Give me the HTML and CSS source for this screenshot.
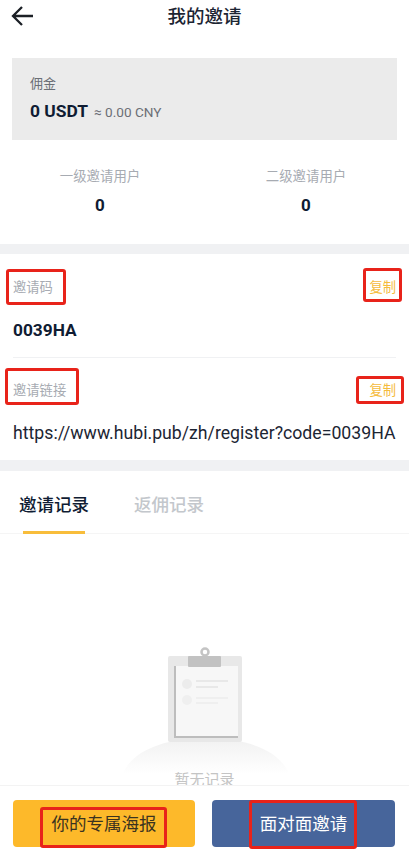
FILE: index.html
```html
<!DOCTYPE html>
<html lang="zh">
<head>
    <meta charset="UTF-8">
    <meta name="viewport" content="width=device-width, initial-scale=1.0">
    <title>我的邀请</title>
    <link rel="stylesheet" href="styles.css">
</head>
<body>
<div class="app">

    <header class="nav">
        <svg class="back" width="26" height="20" viewBox="0 0 26 20">
            <path d="M12 1 3 10l9 9M3 10h20" fill="none" stroke="#1c2026" stroke-width="2.300"/>
        </svg>
        <h1 class="nav-title">我的邀请</h1>
    </header>

    <section class="summary">
        <div class="card">
            <div class="card-label">佣金</div>
            <div class="card-row">
                <span class="card-value">0 USDT</span>
                <span class="card-approx">≈ 0.00 CNY</span>
            </div>
        </div>
        <div class="stats">
            <div class="stat">
                <div class="stat-label">一级邀请用户</div>
                <div class="stat-value">0</div>
            </div>
            <div class="stat">
                <div class="stat-label">二级邀请用户</div>
                <div class="stat-value">0</div>
            </div>
        </div>
    </section>

    <section class="invite">
        <div class="invite-item invite-code">
            <div class="invite-head">
                <span class="invite-label">邀请码<i class="mark mark-code"></i></span>
                <span class="copy">复制<i class="mark mark-copy1"></i></span>
            </div>
            <div class="code-value">0039HA</div>
        </div>
        <div class="invite-item">
            <div class="invite-head">
                <span class="invite-label">邀请链接<i class="mark mark-link"></i></span>
                <span class="copy">复制<i class="mark mark-copy2"></i></span>
            </div>
            <div class="link-value">https://www.hubi.pub/zh/register?code=0039HA</div>
        </div>
    </section>

    <section class="records">
        <div class="tabs">
            <div class="tab tab-active">邀请记录</div>
            <div class="tab">返佣记录</div>
        </div>
        <div class="empty">
            <svg class="empty-pic" width="200" height="134" viewBox="4 0 200 134">
                <defs>
                    <linearGradient id="hill" x1="0" y1="0" x2="0" y2="1">
                        <stop offset="0" stop-color="#f1f1f1"/>
                        <stop offset="1" stop-color="#ffffff"/>
                    </linearGradient>
                </defs>
                <path d="M22 134C30 112 62 98 105 98s75 14 83 36z" fill="url(#hill)"/>
                <rect x="67" y="16" width="74" height="86" rx="2" fill="#e8e8e8"/>
                <rect x="73" y="26" width="64" height="72" fill="#bdbdbd"/>
                <rect x="75" y="26" width="62" height="70" fill="#f7f7f7"/>
                <circle cx="104" cy="12" r="3.500" fill="none" stroke="#c4c4c4" stroke-width="2.500"/>
                <rect x="87" y="16" width="33" height="11" rx="1" fill="#c2c2c2"/>
                <circle cx="86" cy="44" r="5" fill="#ececec"/>
                <circle cx="86" cy="60" r="5" fill="#efefef"/>
                <rect x="95" y="40" width="32" height="2" fill="#e8e8e8"/>
                <rect x="95" y="46" width="22" height="2" fill="#e8e8e8"/>
                <rect x="95" y="57" width="32" height="2" fill="#efefef"/>
                <rect x="95" y="62" width="22" height="2" fill="#efefef"/>
            </svg>
            <div class="empty-text">暂无记录</div>
        </div>
    </section>

    <footer class="actions">
        <button class="btn btn-poster"><span class="btn-text">你的专属海报<i class="mark mark-poster"></i></span></button>
        <button class="btn btn-face"><span class="btn-text">面对面邀请<i class="mark mark-face"></i></span></button>
    </footer>

</div>
</body>
</html>
```

FILE: styles.css
```css
* {
    box-sizing: border-box;
}

body {
    margin: 0;
    background-color: #ffffff;
    color: #0f1c33;
    font-family: Roboto, "Noto Sans CJK SC", sans-serif;
}

.app {
    display: flex;
    flex-direction: column;
    height: 857px;
    overflow: hidden;
}

/* top bar */
.nav {
    position: relative;
    display: flex;
    justify-content: center;
    align-items: center;
    height: 34px;
    flex-shrink: 0;
}

.back {
    position: absolute;
    left: 10px;
    top: 6px;
}

.nav-title {
    margin: 0;
    font-size: 18.500px;
    font-weight: 500;
    line-height: 34px;
    color: #1c2533;
}

/* commission card + user counts */
.summary {
    padding: 24px 12px 0;
    height: 220px;
    flex-shrink: 0;
    border-bottom: 10px solid #f0f1f3;
}

.card {
    height: 82px;
    padding: 17px 18px 0;
    background-color: #ebebeb;
}

.card-label {
    font-size: 13px;
    line-height: 18px;
    color: #6b6f76;
}

.card-row {
    display: flex;
    align-items: baseline;
    margin-top: 7px;
}

.card-value {
    font-size: 17.400px;
    font-weight: 700;
    line-height: 22px;
}

.card-approx {
    margin-left: 6px;
    font-size: 13.600px;
    color: #6b6f76;
}

.stats {
    display: grid;
    grid-template-columns: 176px 236px;
    margin-top: 28px;
}

.stat {
    text-align: center;
}

.stat-label {
    font-size: 13.400px;
    line-height: 18px;
    color: #a7abb2;
}

.stat-value {
    margin-top: 9px;
    font-size: 17px;
    font-weight: 700;
    line-height: 20px;
}

/* invite code and link */
.invite {
    height: 217px;
    padding: 0 13px;
    flex-shrink: 0;
    border-bottom: 11px solid #f0f1f3;
}

.invite-item {
    padding-top: 21px;
}

.invite-code {
    height: 104px;
    padding-top: 22px;
    border-bottom: 1px solid #f0f1f3;
}

.invite-head {
    display: flex;
    justify-content: space-between;
    align-items: center;
    height: 20px;
}

.invite-label {
    position: relative;
    font-size: 13.300px;
    color: #a7abb2;
}

.copy {
    position: relative;
    font-size: 13.300px;
    color: #f5bb3c;
}

.code-value {
    margin-top: 22px;
    font-size: 17.300px;
    font-weight: 700;
    line-height: 24px;
}

.link-value {
    margin-top: 22px;
    font-size: 17.700px;
    line-height: 24px;
    white-space: nowrap;
    color: #1c2533;
}

/* red boxes drawn over the screenshot */
.mark {
    position: absolute;
    border: 3px solid #e8231a;
    border-radius: 3px;
}

.mark-code {
    left: -7px;
    top: -8px;
    width: 60px;
    height: 36px;
}

.mark-copy1 {
    left: -6px;
    top: -9px;
    width: 39px;
    height: 34px;
}

.mark-link {
    left: -8px;
    top: -12px;
    width: 74px;
    height: 37px;
}

.mark-copy2 {
    left: -13px;
    top: -4px;
    width: 48px;
    height: 28px;
}

.mark-poster {
    left: -12px;
    top: -4px;
    width: 127px;
    height: 41px;
}

.mark-face {
    left: -11px;
    top: -11px;
    width: 108px;
    height: 49px;
}

/* tabs */
.records {
    flex: 1;
    min-height: 0;
    overflow: hidden;
}

.tabs {
    display: flex;
    gap: 45px;
    height: 63px;
    padding-left: 19px;
    border-bottom: 1px solid #f5f5f5;
}

.tab {
    position: relative;
    padding-top: 22px;
    font-size: 17.500px;
    font-weight: 500;
    line-height: 24px;
    color: #c3c7cc;
}

.tab-active {
    color: #0f1c33;
}

.tab-active::after {
    content: "";
    position: absolute;
    left: 4px;
    right: 4px;
    bottom: -1px;
    height: 3px;
    background-color: #f8bd3b;
}

/* empty state */
.empty {
    padding-top: 106px;
    text-align: center;
}

.empty-pic {
    display: block;
    margin: 0 auto;
}

.empty-text {
    margin-top: -4px;
    font-size: 15px;
    line-height: 20px;
    color: #c4c4c4;
}

/* bottom buttons */
.actions {
    display: grid;
    grid-template-columns: 182px 183px;
    gap: 17px;
    height: 72px;
    padding: 14px 0 0 13px;
    flex-shrink: 0;
    background-color: #ffffff;
    border-top: 1px solid #f3f3f3;
}

.btn {
    height: 47px;
    padding: 0;
    border: none;
    border-radius: 4px;
    font-family: inherit;
    font-size: 17.500px;
}

.btn-text {
    position: relative;
    display: inline-block;
    line-height: 26px;
}

.btn-poster {
    background-color: #fdb92a;
    color: #3a3320;
}

.btn-face {
    background-color: #47659b;
    color: #ffffff;
}
```
